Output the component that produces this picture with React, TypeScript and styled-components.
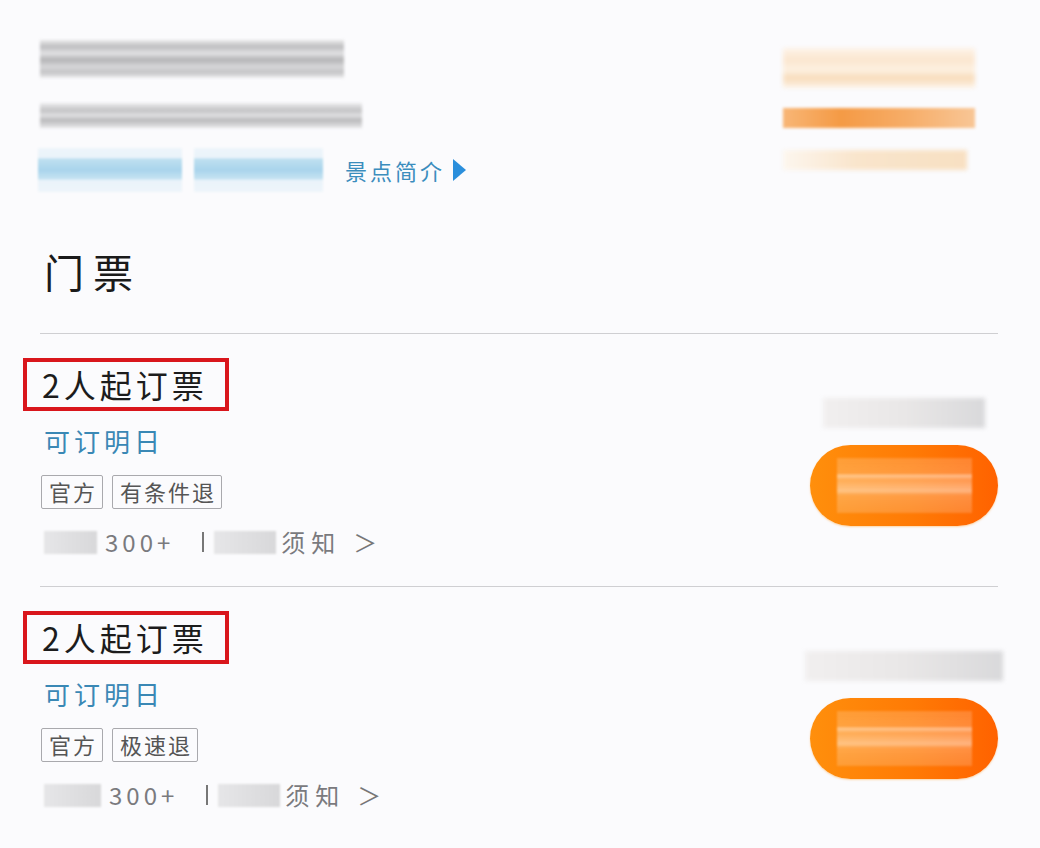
import styled, { createGlobalStyle } from 'styled-components';

const GlobalStyle = createGlobalStyle`
  body {
    margin: 0;
    background: #fbfbfd;
    font-family: "Noto Sans CJK SC", "Noto Sans", sans-serif;
  }
`;

const Page = styled.div`
  width: 1040px;
  height: 848px;
  overflow: hidden;
  box-sizing: border-box;
  padding: 40px 42px 0 40px;
`;

const Header = styled.div`
  display: flex;
  justify-content: space-between;
`;

const HeaderLeft = styled.div`
  display: flex;
  flex-direction: column;
  align-items: flex-start;
`;

const HeaderRight = styled.div`
  display: flex;
  flex-direction: column;
  align-items: flex-start;
  margin-top: 8px;
  margin-right: 23px;
`;

// blurred stand-in for redacted content
const Smudge = styled.div<{ w: number; h: number; bg: string; mt?: number; blur?: number }>`
  width: ${p => p.w}px;
  height: ${p => p.h}px;
  margin-top: ${p => p.mt ?? 0}px;
  background: ${p => p.bg};
  filter: blur(${p => p.blur ?? 1.5}px);
  flex-shrink: 0;
`;

const BlueRow = styled.div`
  display: flex;
  align-items: center;
  gap: 12px;
  margin-top: 20px;
  margin-left: -2px;
`;

const IntroLink = styled.span`
  display: flex;
  align-items: center;
  margin-left: 10px;
  font-size: 22px;
  letter-spacing: 3px;
  color: #3b8dbd;
  line-height: 30px;
`;

const Triangle = styled.span`
  width: 0;
  height: 0;
  margin-left: 8px;
  border-top: 11px solid transparent;
  border-bottom: 11px solid transparent;
  border-left: 13px solid #2b8fdc;
`;

const SectionTitle = styled.h2`
  margin: 51px 0 0 4px;
  font-size: 40px;
  font-weight: 400;
  line-height: 56px;
  letter-spacing: 9px;
  color: #1a1a1a;
`;

const Divider = styled.div<{ mt?: number }>`
  height: 1px;
  margin-top: ${p => p.mt ?? 0}px;
  background: #cfcfd2;
`;

const Ticket = styled.div`
  display: flex;
  justify-content: space-between;
  align-items: center;
  padding: 24px 0 30px;
`;

const TicketInfo = styled.div`
  display: flex;
  flex-direction: column;
  align-items: flex-start;
`;

const TicketName = styled.div`
  margin-left: -17px;
  height: 45px;
  padding: 0 17px 0 15px;
  border: 4px solid #d9161c;
  font-size: 32px;
  line-height: 45px;
  letter-spacing: 4px;
  color: #1c1c1c;
`;

const Availability = styled.div`
  margin: 15px 0 0 4px;
  font-size: 26px;
  line-height: 30px;
  letter-spacing: 4px;
  color: #3a88b5;
`;

const Tags = styled.div`
  display: flex;
  gap: 9px;
  margin-top: 19px;
  margin-left: 1px;
`;

const Tag = styled.span`
  box-sizing: border-box;
  height: 34px;
  padding: 0 5px 0 7px;
  border: 1.5px solid #a9a9ad;
  border-radius: 2px;
  font-size: 22px;
  line-height: 31px;
  letter-spacing: 2px;
  color: #555;
`;

const Meta = styled.div`
  display: flex;
  align-items: center;
  margin-top: 19px;
  margin-left: 4px;
  height: 28px;
  font-size: 24px;
  line-height: 28px;
  color: #7a7a7e;
`;

const Count = styled.span`
  margin-left: 8px;
  letter-spacing: 4px;
`;

const Bar = styled.span`
  width: 2px;
  height: 20px;
  margin: 0 10px 0 28px;
  background: #777;
`;

const Notice = styled.span`
  margin-left: 5px;
  letter-spacing: 6px;
`;

const Chevron = styled.span`
  margin-left: 12px;
  font-size: 24px;
  color: #777;
`;

const PriceBox = styled.div`
  display: flex;
  flex-direction: column;
  align-items: center;
  gap: 17px;
  width: 188px;
  margin-top: 10px;
`;

const BookButton = styled.button`
  display: flex;
  align-items: center;
  justify-content: center;
  width: 188px;
  height: 81px;
  border: none;
  border-radius: 41px;
  padding: 0;
  background: linear-gradient(90deg, #ff8f0c 0%, #ff7a05 55%, #ff6200 100%);
  box-shadow: 0 1px 2px rgba(255, 140, 0, 0.35);
`;

const ButtonLabel = styled.span`
  width: 135px;
  height: 55px;
  background: linear-gradient(
    180deg,
    rgba(255, 255, 255, 0.18) 0%,
    rgba(255, 255, 255, 0.22) 28%,
    rgba(255, 255, 255, 0.55) 32%,
    rgba(255, 255, 255, 0.3) 40%,
    rgba(255, 255, 255, 0.5) 60%,
    rgba(255, 255, 255, 0.25) 68%,
    rgba(255, 255, 255, 0.18) 100%
  );
  filter: blur(1px);
`;

const grayTop =
  'linear-gradient(180deg, #e9e9ea 0%, #bdbdbf 18%, #e2e2e4 35%, #b4b4b6 52%, #d6d6d8 70%, #c4c4c6 85%, #ededee 100%)';
const grayMid =
  'linear-gradient(180deg, #ececee 0%, #c3c3c5 30%, #e0e0e2 50%, #b9b9bb 68%, #e6e6e8 100%)';
const blueBox =
  'linear-gradient(180deg, #eef5fb 0%, #eaf3fa 22%, #bfe0f0 25%, #a9d4ec 50%, #c6e3f2 70%, #eaf3fa 74%, #eef5fb 100%)';
const paleOrange =
  'linear-gradient(180deg, #fdf3e8 0%, #fbe6cf 30%, #fdf1e2 55%, #f8dcbb 75%, #fdf3e8 100%)';
const strongOrange = 'linear-gradient(90deg, #f8b676 0%, #f49a45 30%, #f6ad68 65%, #f8c696 100%)';
const paleOrangeThin = 'linear-gradient(90deg, #fdf6ee 0%, #f9e5cc 40%, #f8e0c2 100%)';
const priceGray = 'linear-gradient(90deg, #f1efef 0%, #e9e7e7 50%, #d9d9db 100%)';
const metaGray = 'linear-gradient(90deg, #e6e6e8, #d8d8da)';

type TicketData = {
  name: string;
  tags: string[];
  priceWidth: number;
  metaLead: number;
};

const tickets: TicketData[] = [
  { name: '2人起订票', tags: ['官方', '有条件退'], priceWidth: 162, metaLead: 53 },
  { name: '2人起订票', tags: ['官方', '极速退'], priceWidth: 198, metaLead: 57 },
];

function TicketRow({ t }: { t: TicketData }) {
  return (
    <Ticket>
      <TicketInfo>
        <TicketName>{t.name}</TicketName>
        <Availability>可订明日</Availability>
        <Tags>
          {t.tags.map(tag => (
            <Tag key={tag}>{tag}</Tag>
          ))}
        </Tags>
        <Meta>
          <Smudge w={t.metaLead} h={23} bg={metaGray} blur={1} />
          <Count>300+</Count>
          <Bar />
          <Smudge w={62} h={23} bg={metaGray} blur={1} />
          <Notice>须知</Notice>
          <Chevron>＞</Chevron>
        </Meta>
      </TicketInfo>
      <PriceBox>
        <Smudge w={t.priceWidth} h={30} bg={priceGray} blur={2} />
        <BookButton>
          <ButtonLabel />
        </BookButton>
      </PriceBox>
    </Ticket>
  );
}

export default function App() {
  return (
    <>
      <GlobalStyle />
      <Page>
        <Header>
          <HeaderLeft>
            <Smudge w={304} h={38} bg={grayTop} />
            <Smudge w={322} h={25} mt={25} bg={grayMid} />
            <BlueRow>
              <Smudge w={144} h={44} bg={blueBox} blur={1.2} />
              <Smudge w={129} h={44} bg={blueBox} blur={1.2} />
              <IntroLink>
                景点简介
                <Triangle />
              </IntroLink>
            </BlueRow>
          </HeaderLeft>
          <HeaderRight>
            <Smudge w={192} h={40} bg={paleOrange} blur={2} />
            <Smudge w={192} h={20} mt={20} bg={strongOrange} blur={1.5} />
            <Smudge w={184} h={20} mt={22} bg={paleOrangeThin} blur={2} />
          </HeaderRight>
        </Header>
        <SectionTitle>门票</SectionTitle>
        <Divider mt={34} />
        <TicketRow t={tickets[0]} />
        <Divider />
        <TicketRow t={tickets[1]} />
      </Page>
    </>
  );
}
